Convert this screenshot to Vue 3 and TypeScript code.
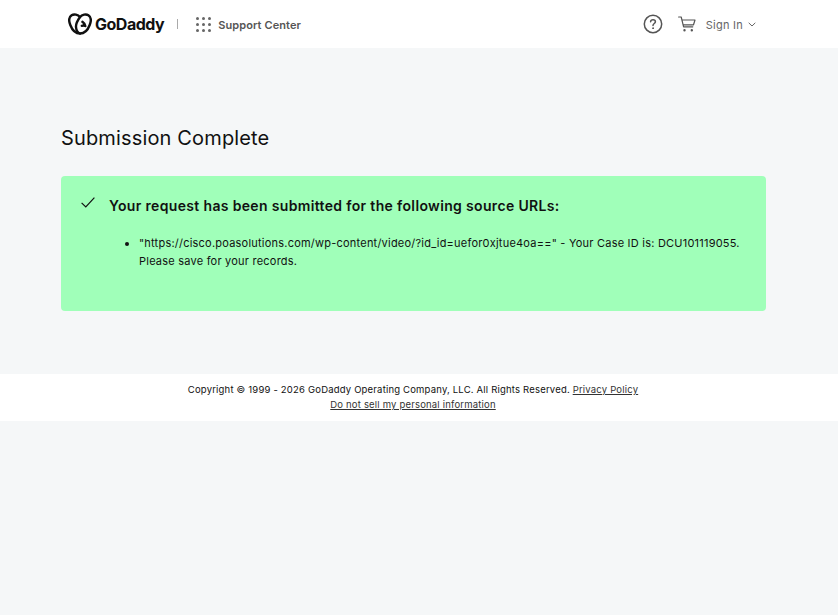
<script setup lang="ts">
const dots = Array.from({ length: 9 }, (_, i) => i)
</script>

<template>
  <div class="page">
    <header class="topbar">
      <div class="topbar__left">
        <svg class="logo" viewBox="0 0 24 22" fill="none" stroke="#111" stroke-width="2.4" stroke-linecap="round" stroke-linejoin="round">
          <path d="M12 4C10 1.500 6 .7 3.600 2.300 1 4 .7 8 2.300 12 4 16.500 7.500 20.500 12 20.500s8-4 9.700-8.500C23.300 8 23 4 20.400 2.300 18 .7 14 1.500 12 4z" />
          <path d="M12 4C9.500 7.500 7.800 11 8 14c.2 3 1.500 5.500 4 6.500M14.400 8.800c1.500 1 2.500 2.500 2.900 4.200-1.200-.5-2.500-.6-3.500-.2" />
        </svg>
        <span class="brand">GoDaddy</span>
        <span class="divider" />
        <span class="grid-icon">
          <i v-for="d in dots" :key="d" />
        </span>
        <span class="section-name">Support Center</span>
      </div>
      <div class="topbar__right">
        <svg class="help" viewBox="0 0 20 20" fill="none" stroke="#555" stroke-width="1.500" stroke-linecap="round">
          <circle cx="10" cy="10" r="8.700" />
          <path d="M7.600 7.800C7.700 6.400 8.800 5.700 10 5.700c1.400 0 2.400.9 2.400 2 0 1.800-2.400 1.800-2.400 3.800" />
          <circle cx="10" cy="14.200" r=".5" fill="#555" stroke-width="1" />
        </svg>
        <svg class="cart" viewBox="0 0 18 16" fill="none" stroke="#555" stroke-width="1.200" stroke-linecap="round" stroke-linejoin="round">
          <path d="M.6 1h2.600l2.400 9.800h9.200M4 4h13l-1.500 4.800H5.300" />
          <circle cx="6.500" cy="14.300" r=".6" fill="#555" />
          <circle cx="13.800" cy="14.300" r=".6" fill="#555" />
        </svg>
        <span class="sign-in">Sign In</span>
        <svg class="chevron" viewBox="0 0 8 5" fill="none" stroke="#666" stroke-width="1">
          <path d="M.7.800 4 4 7.300.8" />
        </svg>
      </div>
    </header>

    <main class="content">
      <h1 class="title">Submission Complete</h1>
      <section class="alert">
        <svg class="alert__check" viewBox="0 0 14 11" fill="none" stroke="#111" stroke-width="1.200">
          <path d="M.6 5.800 4.800 10 13.400.7" />
        </svg>
        <div class="alert__body">
          <h2 class="alert__heading">Your request has been submitted for the following source URLs:</h2>
          <ul class="alert__list">
            <li>"https://cisco.poasolutions.com/wp-content/video/?id_id=uefor0xjtue4oa==" - Your Case ID is: DCU101119055. Please save for your records.</li>
          </ul>
        </div>
      </section>
    </main>

    <footer class="footer">
      <p>Copyright © 1999 - 2026 GoDaddy Operating Company, LLC. All Rights Reserved. <a href="#">Privacy Policy</a></p>
      <p><a href="#">Do not sell my personal information</a></p>
    </footer>
  </div>
</template>

<style>
html,
body {
  background: #f5f7f8;
}
</style>

<style scoped>
.page {
  min-height: 615px;
  background: #f5f7f8;
  color: #111;
  font-family: Inter, "Noto Sans", sans-serif;
}

.topbar {
  display: flex;
  align-items: center;
  justify-content: space-between;
  height: 48px;
  padding: 0 82px 0 68px;
  background: #fff;
}

.topbar__left,
.topbar__right {
  display: flex;
  align-items: center;
}

.topbar__right {
  margin-left: -2px;
}

.logo {
  width: 24px;
  height: 22px;
}

.brand {
  margin-left: 3px;
  font-size: 16px;
  font-weight: 700;
  letter-spacing: -0.5px;
}

.divider {
  width: 1px;
  height: 10px;
  margin: 0 18px 0 13px;
  background: #aaa;
}

.grid-icon {
  display: grid;
  grid-template-columns: repeat(3, 3px);
  gap: 3px;
}

.grid-icon i {
  width: 3px;
  height: 3px;
  border-radius: 50%;
  background: #666;
}

.section-name {
  margin-left: 7px;
  padding-top: 2px;
  color: #555;
  font-size: 11px;
  font-weight: 600;
  letter-spacing: 0.1px;
}

.help {
  width: 20px;
  height: 20px;
}

.cart {
  width: 18px;
  height: 16px;
  margin-left: 15px;
}

.sign-in {
  margin-left: 10px;
  padding-top: 2px;
  color: #666;
  font-size: 11px;
  letter-spacing: 0.25px;
}

.chevron {
  width: 8px;
  height: 5px;
  margin-left: 5px;
}

.content {
  padding: 78px 72px 63px 61px;
}

.title {
  margin: 0 0 25px;
  font-size: 20px;
  font-weight: 400;
  line-height: 25px;
  letter-spacing: 0.15px;
}

.alert {
  display: flex;
  gap: 14px;
  height: 135px;
  box-sizing: border-box;
  padding: 20px;
  border-radius: 4px;
  background: #a0ffb9;
}

.alert__check {
  flex: none;
  width: 14px;
  height: 11px;
  margin-top: 1px;
}

.alert__heading {
  margin: 0 0 18px;
  font-size: 14px;
  font-weight: 600;
  line-height: 20px;
  letter-spacing: 0.34px;
}

.alert__list {
  margin: 0;
  padding-left: 30px;
  font-size: 11px;
  line-height: 18px;
  letter-spacing: 0.22px;
}

.footer {
  height: 47px;
  box-sizing: border-box;
  padding: 8px 12px 0 0;
  background: #fff;
  font-size: 9.5px;
  line-height: 15px;
  letter-spacing: 0.19px;
  text-align: center;
}

.footer p {
  margin: 0;
}

.footer a {
  color: #333;
}
</style>
